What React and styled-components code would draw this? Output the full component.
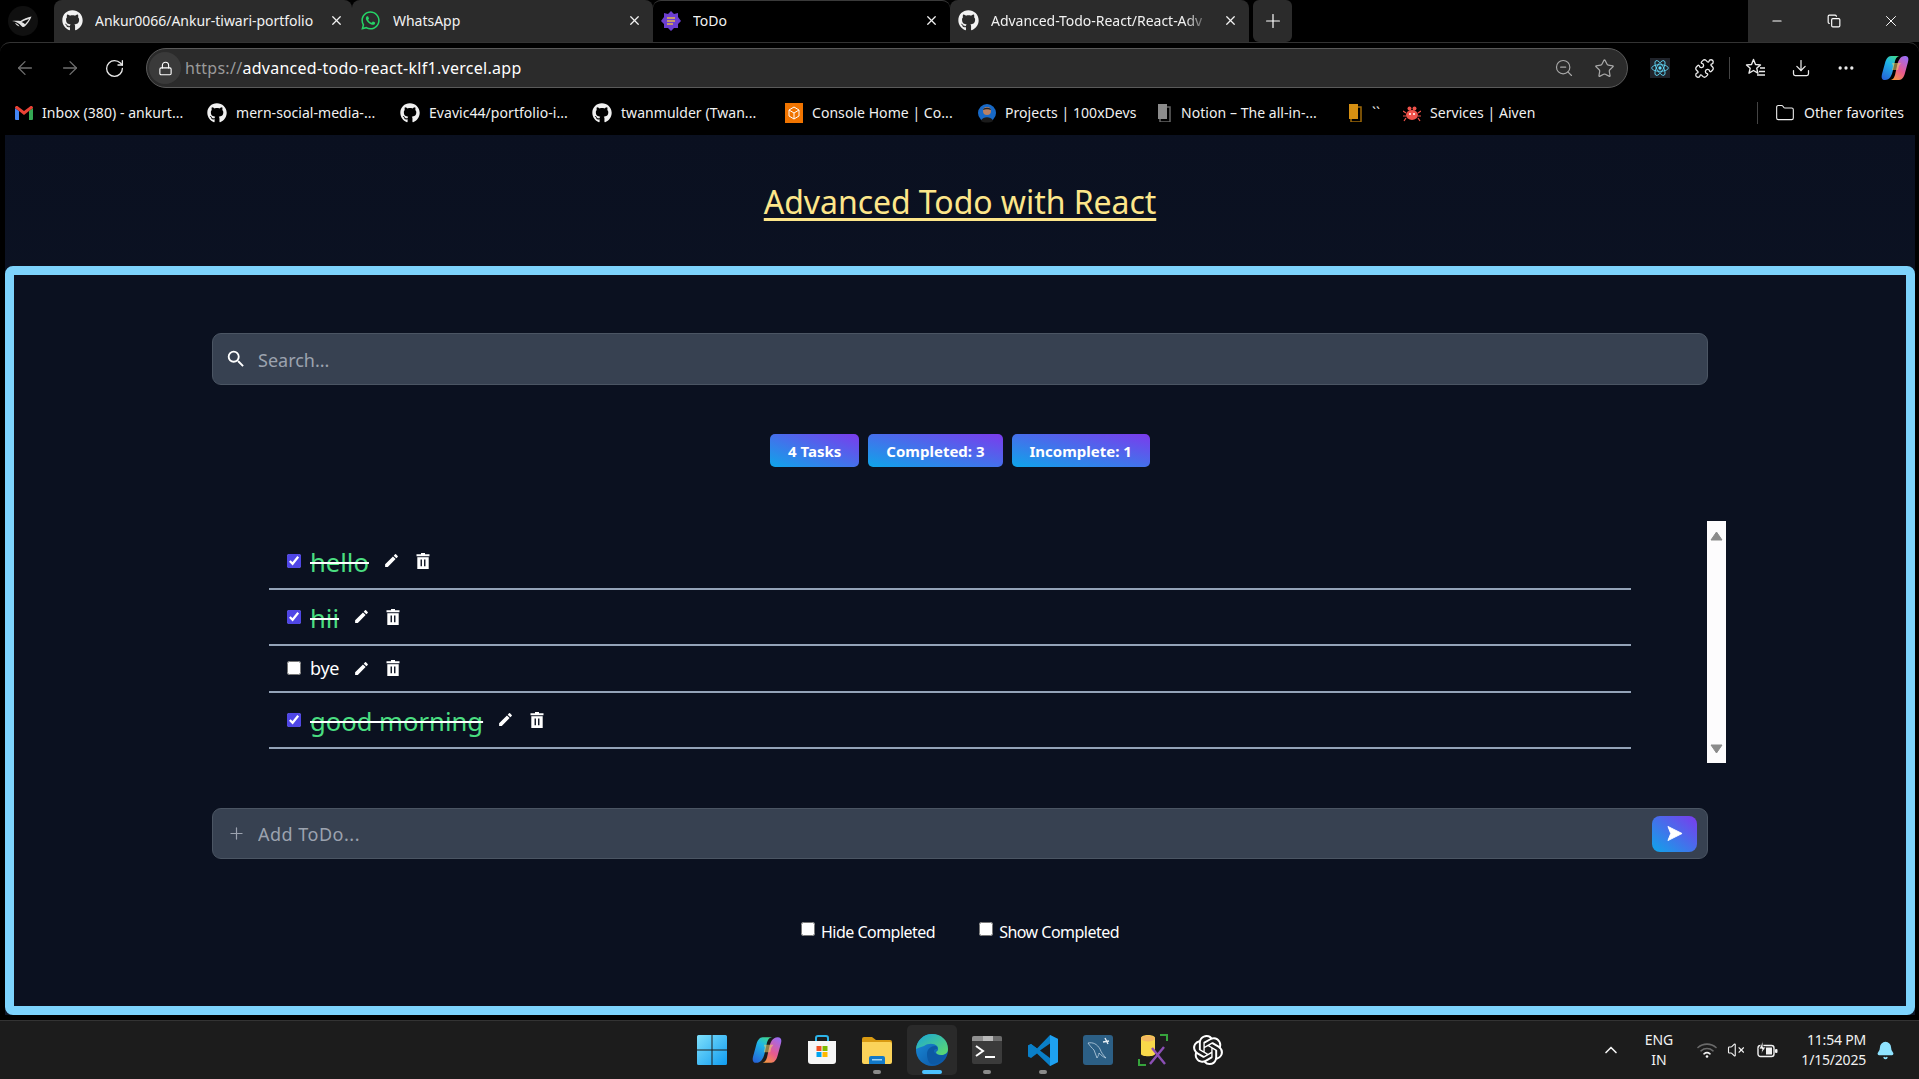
import React from 'react'
import styled, { createGlobalStyle } from 'styled-components'
import {
  ArrowLeft, ArrowRight, RotateCw, Lock, ZoomOut, Star, Puzzle, Download, MoreHorizontal,
  Folder, Plus, X, Minus, Copy, ChevronUp, VolumeX, Bell,
} from 'lucide-react'
import { FaGithub, FaWhatsapp } from 'react-icons/fa'
import { MdEdit, MdSearch } from 'react-icons/md'
import { SiOpenai } from 'react-icons/si'

const GlobalStyle = createGlobalStyle`
  html, body { margin: 0; padding: 0; height: 100%; background: #000; }
  #root { height: 100%; }
  * { box-sizing: border-box; }
  body { font-family: "Noto Sans", "Open Sans", "Liberation Sans", sans-serif; overflow: hidden; }
`

const Screen = styled.div`
  width: 1919px;
  height: 1079px;
  display: flex;
  flex-direction: column;
  background: #000;
  color: #fff;
`

/* ---------- browser chrome ---------- */
const TabStrip = styled.div`
  height: 42px;
  display: flex;
  align-items: stretch;
  flex-shrink: 0;
`
const RogSlot = styled.div`
  width: 54px;
  padding-right: 8px;
  display: flex;
  align-items: center;
  justify-content: center;
`
const Tab = styled.div`
  width: ${p => p.$w}px;
  padding: 0 ${p => p.$pr || 11}px 2px 8px;
  display: flex;
  align-items: center;
  gap: 12px;
  font-size: 14px;
  background: ${p => (p.$active ? '#000' : '#2b2b2b')};
  border-top: ${p => (p.$active ? '1px solid #3a3a3a' : 'none')};
  border-radius: 8px 8px 0 0;
  color: #f2f2f2;
  flex-shrink: 0;
`
const TabTitle = styled.span`
  flex: 1;
  overflow: hidden;
  white-space: nowrap;
  letter-spacing: -0.03px;
  mask-image: ${p => (p.$fade ? 'linear-gradient(90deg, #000 88%, transparent)' : 'none')};
`
const NewTab = styled.div`
  width: 39px;
  margin-left: 4px;
  background: #2b2b2b;
  border-radius: 6px;
  display: flex;
  align-items: center;
  justify-content: center;
`
const StripSpace = styled.div`
  flex: 1;
`
const WindowButtons = styled.div`
  width: 171px;
  background: #2b2b2b;
  display: grid;
  grid-template-columns: repeat(3, 1fr);
  place-items: center;
`
const Toolbar = styled.div`
  height: 51px;
  display: flex;
  align-items: center;
  padding: 0 2px;
  border-top: 1px solid #333;
  border-radius: 10px 10px 0 0;
  flex-shrink: 0;
`
const ToolButton = styled.div`
  width: ${p => p.$w || 45}px;
  height: 40px;
  margin-left: ${p => p.$ml || 0}px;
  display: flex;
  align-items: center;
  justify-content: center;
  color: ${p => (p.$dim ? '#6f6f6f' : '#eaeaea')};
  flex-shrink: 0;
`
const AddressBar = styled.div`
  flex: 1;
  height: 40px;
  margin: 0 9px 0 9px;
  background: #2b2b2b;
  border: 1px solid #5a5a5a;
  border-radius: 20px;
  display: flex;
  align-items: center;
  padding: 0 3px 0 2px;
  font-size: 16px;
`
const LockBadge = styled.div`
  width: 32px;
  height: 32px;
  border-radius: 50%;
  background: #3a3a3a;
  display: flex;
  align-items: center;
  justify-content: center;
  margin-right: 4px;
`
const UrlText = styled.div`
  flex: 1;
  letter-spacing: 0.28px;
  color: #fff;
  span { color: #9a9a9a; }
`
const Divider = styled.div`
  width: 1px;
  height: ${p => p.$h || 22}px;
  margin-left: ${p => p.$ml || 0}px;
  background: #444;
  flex-shrink: 0;
`
const Bookmarks = styled.div`
  height: 42px;
  display: flex;
  align-items: center;
  padding: 0 15px 3px 15px;
  font-size: 14px;
  letter-spacing: 0.05px;
  color: #f0f0f0;
  flex-shrink: 0;
`
const Bookmark = styled.div`
  width: ${p => p.$w}px;
  padding-left: ${p => p.$pl || 0}px;
  display: flex;
  align-items: center;
  gap: 9px;
  white-space: nowrap;
  overflow: hidden;
  flex-shrink: 0;
`
const BookmarkSpace = styled.div`
  flex: 1;
`

/* ---------- page ---------- */
const Page = styled.div`
  flex: 1;
  margin: 0 4px 5px 5px;
  display: flex;
  flex-direction: column;
  background: linear-gradient(180deg, #0a1020 0%, #111a2c 100%);
  min-height: 0;
`
const Header = styled.div`
  height: 131px;
  display: flex;
  align-items: center;
  justify-content: center;
  flex-shrink: 0;
`
const Title = styled.h1`
  margin: 2px 0 0 0;
  font-size: 32px;
  font-weight: 400;
  color: #fde68a;
  text-decoration: underline;
  text-underline-offset: 4px;
  text-decoration-thickness: 3px;
  letter-spacing: -0.05px;
`
const Panel = styled.main`
  flex: 1;
  border: 9px solid #7dd3fc;
  border-radius: 8px;
  background: #0b1120;
  padding: 58px 198px 0 198px;
  display: flex;
  flex-direction: column;
  min-height: 0;
`
const Field = styled.div`
  height: ${p => p.$h}px;
  background: #374151;
  border: 1px solid #4b5563;
  border-radius: 9px;
  display: flex;
  align-items: center;
  padding: 0 10px 0 12px;
  flex-shrink: 0;
`
const FieldIcon = styled.div`
  width: 22px;
  margin-right: 11px;
  display: flex;
  align-items: center;
  justify-content: center;
  color: ${p => p.$color};
`
const FieldInput = styled.input`
  flex: 1;
  background: transparent;
  border: none;
  outline: none;
  padding: 1px 0 0 0;
  font: inherit;
  font-size: 18px;
  letter-spacing: ${p => p.$ls || 0}px;
  color: #fff;
  &::placeholder { color: #9ca3af; opacity: 1; }
`
const Badges = styled.div`
  margin-top: 49px;
  display: flex;
  justify-content: center;
  gap: 9px;
  flex-shrink: 0;
`
const Badge = styled.div`
  height: 33px;
  padding: 0 18px;
  display: flex;
  align-items: center;
  border-radius: 5px;
  background: linear-gradient(to top right, #0ea5e9, #7c3aed);
  font-size: 15px;
  font-weight: 700;
`
const ListArea = styled.div`
  margin: 54px -18px 0 0;
  height: 242px;
  display: flex;
  justify-content: flex-end;
  flex-shrink: 0;
`
const TodoList = styled.ul`
  list-style: none;
  margin: 13px 76px 0 0;
  padding: 0;
  width: 1362px;
`
const TodoRow = styled.li`
  height: ${p => p.$h}px;
  border-bottom: 2px solid #94a3b8;
  padding: 0 0 1px 18px;
  display: flex;
  align-items: center;
`
const Check = styled.input.attrs({ type: 'checkbox' })`
  width: 14px;
  height: 14px;
  margin: 0;
  accent-color: #4f46e5;
  flex-shrink: 0;
`
const TodoText = styled.span`
  margin: ${p => (p.$done ? 4 : 0)}px 14px 0 9px;
  font-size: ${p => (p.$done ? 25.6 : 18)}px;
  letter-spacing: ${p => (p.$done ? 0 : -0.3)}px;
  color: ${p => (p.$done ? '#4ade80' : '#fff')};
  text-decoration: ${p => (p.$done ? 'line-through' : 'none')};
  text-decoration-color: #fff;
  text-decoration-thickness: 2px;
`
const RowIcon = styled.button`
  background: none;
  border: none;
  padding: 0;
  margin-right: 16px;
  color: #fff;
  display: flex;
`
const ScrollTrack = styled.div`
  width: 19px;
  background: #fdfcfd;
  display: flex;
  flex-direction: column;
  justify-content: space-between;
  align-items: center;
  padding: 10px 0 9px;
`
const AddField = styled(Field)`
  margin-top: 45px;
`
const SendButton = styled.button`
  width: 45px;
  height: 36px;
  border: none;
  border-radius: 8px;
  background: linear-gradient(to top right, #0ea5e9, #7c3aed);
  display: flex;
  align-items: center;
  justify-content: center;
  padding: 0;
`
const Filters = styled.div`
  margin-top: 62px;
  display: flex;
  justify-content: center;
  gap: 44px;
  font-size: 16px;
  letter-spacing: -0.52px;
`
const FilterLabel = styled.label`
  display: flex;
  align-items: flex-start;
  gap: 6px;
  line-height: 22px;
  input { margin-top: 1px; }
`

/* ---------- taskbar ---------- */
const Taskbar = styled.footer`
  height: 59px;
  background: #1c1c1c;
  border-top: 1px solid #333;
  display: flex;
  align-items: center;
  flex-shrink: 0;
`
const TaskIcons = styled.div`
  margin-left: 687px;
  display: flex;
  align-items: center;
  gap: 5.1px;
`
const TaskIcon = styled.div`
  width: 50px;
  height: 50px;
  display: flex;
  align-items: center;
  justify-content: center;
  position: relative;
  border-radius: 5px;
  background: ${p => (p.$active ? '#2a2a2a' : 'transparent')};
  &::after {
    content: '';
    display: ${p => (p.$dot || p.$active ? 'block' : 'none')};
    position: absolute;
    bottom: 1px;
    left: 50%;
    transform: translateX(-50%);
    width: ${p => (p.$active ? 20 : 8)}px;
    height: 4px;
    border-radius: 2px;
    background: ${p => (p.$active ? '#4cc2ff' : '#8a8a8a')};
  }
`
const Tray = styled.div`
  margin-left: auto;
  display: flex;
  align-items: center;
  padding-right: 19px;
  color: #f2f2f2;
`
const TrayText = styled.div`
  font-size: 14px;
  line-height: 20px;
  text-align: ${p => p.$align || 'center'};
  letter-spacing: ${p => p.$ls || 0};
`
const TraySlot = styled.div`
  width: ${p => p.$w}px;
  padding-right: ${p => p.$pr || 0}px;
  display: flex;
  align-items: center;
  justify-content: ${p => (p.$end ? 'flex-end' : 'center')};
`

/* ---------- drawn logos ---------- */
const RogLogo = () => (
  <svg width="30" height="30" viewBox="0 0 30 30">
    <circle cx="15" cy="15" r="15" fill="#101010" />
    <path d="M4 15c4 .5 7 2 10 5.500 1 .8 2 .6 3-.3 3-2.700 5-6 6.500-9.700-4 1-8 2.300-11 4.500C10 14.500 7 14.500 4 15z" fill="#e0e0e0" />
    <path d="M7 17c2 .5 3.500 1.700 4.500 3.500C9.500 20 8 19 7 17z" fill="#e0e0e0" />
    <path d="M13.500 16c2.500-1.300 5-2.300 7.500-3-1 2-2.500 3.800-4 5.300-1-1-2-1.700-3.500-2.300z" fill="#101010" />
  </svg>
)
const Gmail = () => (
  <svg width="18" height="14" viewBox="0 0 18 14">
    <path d="M0 2l4 3v9H1a1 1 0 0 1-1-1z" fill="#4285f4" />
    <path d="M18 2l-4 3v9h3a1 1 0 0 0 1-1z" fill="#34a853" />
    <path d="M0 2c0-2 2-2.500 3-1.500L9 5l6-4.500C16-.5 18 0 18 2l-4 3-5 4-5-4z" fill="#ea4335" />
  </svg>
)
const TodoFavicon = () => (
  <svg width="20" height="20" viewBox="0 0 20 20">
    <polygon points="10,0 13,3 17,2 17,6 20,10 17,13 17,17 13,17 10,20 7,17 3,17 3,13 0,10 3,6 3,2 7,3" fill="#6d3fd1" />
    <path d="M6 7h8M6 10h8M6 13h6" stroke="#e5b94a" strokeWidth="1.6" />
  </svg>
)
const ReactExt = () => (
  <svg width="20" height="20" viewBox="-12 -12 24 24">
    <rect x="-12" y="-12" width="24" height="24" fill="#20232a" />
    <circle r="2" fill="#61dafb" />
    <g fill="none" stroke="#61dafb" strokeWidth="1">
      <ellipse rx="10" ry="4" />
      <ellipse rx="10" ry="4" transform="rotate(60)" />
      <ellipse rx="10" ry="4" transform="rotate(120)" />
    </g>
  </svg>
)
const FavoritesIcon = () => (
  <svg width="22" height="22" viewBox="0 0 22 22" fill="none" stroke="#eaeaea" strokeWidth="1.400" strokeLinejoin="round">
    <path d="M8.500 2.500l2 5 5 .4-3.800 3.300 1.200 5-4.400-2.700L4 16.200l1.200-5L1.500 7.900l5-.4z" />
    <path d="M15 11h5M14 14.500h6M12 18h8" />
  </svg>
)
const CopilotLogo = ({ size }) => (
  <svg width={size} height={size} viewBox="0 0 28 28">
    <defs>
      <linearGradient id={`cpA${size}`} x1="0.7" y1="0" x2="0.2" y2="1">
        <stop offset="0" stopColor="#3fd68f" />
        <stop offset=".35" stopColor="#1fb6e8" />
        <stop offset="1" stopColor="#2565d8" />
      </linearGradient>
      <linearGradient id={`cpB${size}`} x1="0.8" y1="0" x2="0.2" y2="1">
        <stop offset="0" stopColor="#9b6cf2" />
        <stop offset=".55" stopColor="#e8598f" />
        <stop offset="1" stopColor="#f59a3c" />
      </linearGradient>
    </defs>
    <path d="M18 26H8c4 0 5-2 6-5l2-9c1-5 3-10 8-10 3 0 4 2 3 6l-3 11c-1 4-3 7-6 7z" fill={`url(#cpB${size})`} />
    <path d="M10 2h10c-4 0-5 2-6 5l-2 9c-1 5-3 10-8 10-3 0-4-2-3-6L4 9c1-4 3-7 6-7z" fill={`url(#cpA${size})`} />
    <path d="M11 9h9l-2 3-1 4h-6l1-4z" fill="#f3d36a" opacity=".55" />
  </svg>
)
const ConsoleLogo = () => (
  <svg width="18" height="20" viewBox="0 0 18 20">
    <rect width="18" height="20" fill="#f07400" />
    <path d="M9 4l5 3v6l-5 3-5-3V7zM4 7l5 3 5-3M9 10v6" fill="none" stroke="#fff" strokeWidth="1" />
  </svg>
)
const Avatar = () => (
  <svg width="18" height="20" viewBox="0 0 18 20">
    <circle cx="9" cy="10" r="9" fill="#1769c7" />
    <circle cx="9" cy="8" r="4" fill="#b98063" />
    <path d="M5 7c0-3 8-3 8 0-2-1-6-1-8 0z" fill="#222" />
    <path d="M3 18c1-5 11-5 12 0-3 2-9 2-12 0z" fill="#1b1b1b" />
  </svg>
)
const NoteIcon = ({ color, fold }) => (
  <svg width="15" height="18" viewBox="0 0 15 18">
    <path d="M3 3h10v15H3z" fill="none" stroke={fold} strokeWidth="1.5" />
    <path d="M1 0h9v15H1z" fill={color} />
  </svg>
)
const AivenLogo = () => (
  <svg width="18" height="18" viewBox="0 0 18 18">
    <ellipse cx="9" cy="11" rx="6" ry="5" fill="#f0524a" />
    <circle cx="6.500" cy="4.500" r="2" fill="#f0524a" />
    <circle cx="11.500" cy="4.500" r="2" fill="#f0524a" />
    <path d="M3 9L0 7M3 12H0M3 14l-2 3M15 9l3-2M15 12h3M15 14l2 3" stroke="#f0524a" strokeWidth="1.2" />
    <circle cx="7" cy="10" r="1" fill="#fff" />
    <circle cx="11" cy="10" r="1" fill="#fff" />
  </svg>
)
const TrashIcon = () => (
  <svg width="14" height="16" viewBox="0 0 14 16">
    <path d="M5 0h4v1.200h4.500v2H.5v-2H5z" fill="#fff" />
    <path d="M1.300 4.200h11.400V16H1.300z" fill="#fff" />
    <path d="M4.500 6.500v6.800M8 6.500v6.800" stroke="#0b1120" strokeWidth="1.400" transform="translate(.75 0)" />
  </svg>
)
const WifiIcon = () => (
  <svg width="20" height="16" viewBox="0 0 20 16" fill="none" strokeWidth="1.600" strokeLinecap="round">
    <path d="M1 5.500c5-4.500 13-4.500 18 0" stroke="#6a6a6a" />
    <path d="M4 8.800c3.500-3 8.500-3 12 0" stroke="#6a6a6a" />
    <path d="M7 11.800c1.800-1.400 4.200-1.400 6 0" stroke="#f2f2f2" />
    <circle cx="10" cy="14.500" r="1.300" fill="#f2f2f2" stroke="none" />
  </svg>
)
const BatteryIcon = () => (
  <svg width="21" height="18" viewBox="0 0 21 18">
    <rect x="1" y="4.500" width="16" height="11" rx="2.500" fill="none" stroke="#f2f2f2" strokeWidth="1.400" />
    <rect x="9" y="6.500" width="6" height="7" fill="#f2f2f2" />
    <rect x="18" y="8" width="2.500" height="4" rx="1" fill="#f2f2f2" />
    <path d="M6 0L2 8h3l-1 5 5-7H6z" fill="#f2f2f2" stroke="#1c1c1c" strokeWidth=".8" />
  </svg>
)
const WinLogo = () => (
  <svg width="30" height="30" viewBox="0 0 30 30">
    <defs>
      <linearGradient id="winG" x1="0" y1="0" x2="1" y2="1">
        <stop offset="0" stopColor="#7fe0fb" />
        <stop offset="1" stopColor="#0f9bf0" />
      </linearGradient>
    </defs>
    <path d="M0 1.500A1.500 1.500 0 0 1 1.500 0h13v14.500H0zM15.500 0h13A1.500 1.500 0 0 1 30 1.500v13H15.500zM0 15.500h14.500V30h-13A1.500 1.500 0 0 1 0 28.500zM15.500 15.500H30v13a1.500 1.500 0 0 1-1.500 1.500h-13z" fill="url(#winG)" />
  </svg>
)
const StoreLogo = () => (
  <svg width="30" height="30" viewBox="0 0 30 30">
    <path d="M9 6V3a2 2 0 0 1 2-2h8a2 2 0 0 1 2 2v3" fill="none" stroke="#2cb3e8" strokeWidth="2" />
    <path d="M1 6h28v20a3 3 0 0 1-3 3H4a3 3 0 0 1-3-3z" fill="#f6f6f6" />
    <rect x="9.500" y="11" width="5" height="5" fill="#f25022" />
    <rect x="15.500" y="11" width="5" height="5" fill="#7fba00" />
    <rect x="9.500" y="17" width="5" height="5" fill="#00a4ef" />
    <rect x="15.500" y="17" width="5" height="5" fill="#ffb900" />
  </svg>
)
const FolderLogo = () => (
  <svg width="30" height="28" viewBox="0 0 30 28">
    <path d="M0 3a2 2 0 0 1 2-2h8l4 3h14a2 2 0 0 1 2 2v4H0z" fill="#d99a12" />
    <path d="M0 6h28a2 2 0 0 1 2 2v18a2 2 0 0 1-2 2H2a2 2 0 0 1-2-2z" fill="#fbd35a" />
    <path d="M7 28v-6a2 2 0 0 1 2-2h12a2 2 0 0 1 2 2v6z" fill="#1279c9" />
    <rect x="10" y="23" width="10" height="1.500" fill="#9ed3f5" />
  </svg>
)
const EdgeLogo = () => (
  <svg width="32" height="32" viewBox="0 0 32 32">
    <defs>
      <linearGradient id="edgeA" x1="0" y1="0" x2="1" y2="1">
        <stop offset="0" stopColor="#1aa5d8" />
        <stop offset="1" stopColor="#5fdc6a" />
      </linearGradient>
      <linearGradient id="edgeB" x1="0" y1="0" x2="1" y2="1">
        <stop offset="0" stopColor="#1b8fdc" />
        <stop offset="1" stopColor="#0a4f9e" />
      </linearGradient>
    </defs>
    <circle cx="16" cy="16" r="16" fill="url(#edgeB)" />
    <path d="M0 15C1 6 8 0 16 0c9 0 16 6 16 15 0 4-3 6-7 6-3 0-5-1-5-3 2-1 3-3 1-6-3-3-9-3-13 0-3 1-6 2-8 3z" fill="url(#edgeA)" />
    <path d="M11 20c0-5 4-8 8-8 2 0 3 1 2 3-3 0-4 2-2 4 3 3 8 3 11 1-3 7-10 11-15 10-3-2-4-6-4-10z" fill="#0c59a4" />
  </svg>
)
const TerminalLogo = () => (
  <svg width="30" height="28" viewBox="0 0 30 28">
    <rect width="30" height="28" rx="2" fill="#3b3b3b" />
    <path d="M0 2a2 2 0 0 1 2-2h9v5H0z" fill="#8f8f8f" />
    <rect x="11" width="10" height="5" fill="#b8b8b8" />
    <path d="M21 0h7a2 2 0 0 1 2 2v3h-9z" fill="#6c6c6c" />
    <path d="M4 10l7 5-7 5" fill="none" stroke="#fff" strokeWidth="2" />
    <rect x="13" y="20" width="10" height="2" fill="#fff" />
  </svg>
)
const VsCodeLogo = () => (
  <svg width="30" height="31" viewBox="0 0 30 31">
    <path d="M22 0l8 4v23l-8 4-13-12.500-6 4.500-3-1.500V10.500L3 9l6 4.500z" fill="#0a7fc8" />
    <path d="M22 0l8 4v23l-8 4z" fill="#1ea1f2" />
    <path d="M3 9l19 14v-15L3 22l-3-1.500v-10z" fill="#0a7fc8" />
    <path d="M22 8.500L12 15.500l10 7.500z" fill="#1c1c1c" />
  </svg>
)
const MysqlLogo = () => (
  <svg width="30" height="30" viewBox="0 0 30 30">
    <rect width="30" height="30" rx="3" fill="#2c5f85" />
    <path d="M5 8c5-1 9 1 12 6 1 3 3 6 6 9-3-1-5-3-7-5 0 2-1 3-2 5-1-3-2-5-3-8-2-2-4-4-6-7z" fill="none" stroke="#bcd2e2" strokeWidth=".8" />
    <path d="M22 3l3 6M20 7l6-1" stroke="#e6eef4" strokeWidth="1.400" />
  </svg>
)
const UtilLogo = () => (
  <svg width="30" height="32" viewBox="0 0 30 32">
    <path d="M22 1h7v6M1 25v6h7" fill="none" stroke="#36a33c" strokeWidth="2" />
    <path d="M3 4c0-4 14-4 14 0v16c0 3-14 3-14 0z" fill="#f8d94a" />
    <ellipse cx="10" cy="4.500" rx="7" ry="3" fill="#f4b860" />
    <path d="M12 30l14-17M14 14l13 16" stroke="#8b4fb5" strokeWidth="2.400" />
  </svg>
)

const tasks = [
  { text: 'hello', done: true, h: 56 },
  { text: 'hii', done: true, h: 56 },
  { text: 'bye', done: false, h: 47 },
  { text: 'good morning', done: true, h: 56 },
]

const bookmarks = [
  { w: 192, icon: <Gmail />, text: 'Inbox (380) - ankurt...' },
  { w: 193, icon: <FaGithub size={20} />, text: 'mern-social-media-...' },
  { w: 192, icon: <FaGithub size={20} />, text: 'Evavic44/portfolio-i...' },
  { w: 193, icon: <FaGithub size={20} />, text: 'twanmulder (Twan...' },
  { w: 193, icon: <ConsoleLogo />, text: 'Console Home | Co...' },
  { w: 179, icon: <Avatar />, text: 'Projects | 100xDevs' },
  { w: 191, icon: <NoteIcon color="#8c8c8c" fold="#666" />, text: 'Notion – The all-in-...' },
  { w: 55, icon: <NoteIcon color="#d58f12" fold="#a06a08" />, text: '``' },
  { w: 160, icon: <AivenLogo />, text: 'Services | Aiven' },
]

const App = () => {
  return (
    <Screen>
      <GlobalStyle />
      <TabStrip>
        <RogSlot><RogLogo /></RogSlot>
        <Tab $w={298} $pr={8}>
          <FaGithub size={21} />
          <TabTitle>Ankur0066/Ankur-tiwari-portfolio</TabTitle>
          <X size={15} />
        </Tab>
        <Tab $w={301}>
          <FaWhatsapp size={21} color="#25d366" />
          <TabTitle>WhatsApp</TabTitle>
          <X size={15} />
        </Tab>
        <Tab $w={297} $active>
          <TodoFavicon />
          <TabTitle>ToDo</TabTitle>
          <X size={15} />
        </Tab>
        <Tab $w={299}>
          <FaGithub size={21} />
          <TabTitle $fade>Advanced-Todo-React/React-Adv</TabTitle>
          <X size={15} />
        </Tab>
        <NewTab><Plus size={22} strokeWidth={1.3} /></NewTab>
        <StripSpace />
        <WindowButtons>
          <Minus size={14} />
          <Copy size={14} />
          <X size={18} strokeWidth={1.3} />
        </WindowButtons>
      </TabStrip>

      <Toolbar>
        <ToolButton $dim><ArrowLeft size={22} strokeWidth={1.4} /></ToolButton>
        <ToolButton $dim><ArrowRight size={22} strokeWidth={1.4} /></ToolButton>
        <ToolButton><RotateCw size={21} strokeWidth={1.5} /></ToolButton>
        <AddressBar>
          <LockBadge><Lock size={15} strokeWidth={1.8} /></LockBadge>
          <UrlText><span>https://</span>advanced-todo-react-klf1.vercel.app</UrlText>
          <ToolButton $w={40} $dim><ZoomOut size={20} strokeWidth={1.4} color="#a8a8a8" /></ToolButton>
          <ToolButton $w={40} $dim><Star size={21} strokeWidth={1.4} color="#a8a8a8" /></ToolButton>
        </AddressBar>
        <ToolButton><ReactExt /></ToolButton>
        <ToolButton><Puzzle size={21} strokeWidth={1.5} /></ToolButton>
        <Divider $ml={2} />
        <ToolButton $ml={3}><FavoritesIcon /></ToolButton>
        <ToolButton><Download size={20} strokeWidth={1.5} /></ToolButton>
        <ToolButton><MoreHorizontal size={20} /></ToolButton>
        <ToolButton $ml={4}><CopilotLogo size={28} /></ToolButton>
      </Toolbar>

      <Bookmarks>
        {bookmarks.map(b => (
          <Bookmark key={b.text} $w={b.w}>{b.icon}{b.text}</Bookmark>
        ))}
        <BookmarkSpace />
        <Divider $h={22} />
        <Bookmark $w={146} $pl={17}>
          <Folder size={20} strokeWidth={1.3} />Other favorites
        </Bookmark>
      </Bookmarks>

      <Page>
        <Header>
          <Title>Advanced Todo with React</Title>
        </Header>
        <Panel>
          <Field $h={52}>
            <FieldIcon $color="#fff"><MdSearch size={24} /></FieldIcon>
            <FieldInput placeholder="Search..." />
          </Field>

          <Badges>
            <Badge>4 Tasks</Badge>
            <Badge>Completed: 3</Badge>
            <Badge>Incomplete: 1</Badge>
          </Badges>

          <ListArea>
            <TodoList>
              {tasks.map(t => (
                <TodoRow key={t.text} $h={t.h}>
                  <Check defaultChecked={t.done} />
                  <TodoText $done={t.done}>{t.text}</TodoText>
                  <RowIcon><MdEdit size={17} /></RowIcon>
                  <RowIcon><TrashIcon /></RowIcon>
                </TodoRow>
              ))}
            </TodoList>
            <ScrollTrack>
              <svg width="13" height="10" viewBox="0 0 13 10"><path d="M6.500 1L12 9H1z" fill="#8b8b8b" stroke="#8b8b8b" strokeLinejoin="round" /></svg>
              <svg width="13" height="10" viewBox="0 0 13 10"><path d="M6.500 9L12 1H1z" fill="#8b8b8b" stroke="#8b8b8b" strokeLinejoin="round" /></svg>
            </ScrollTrack>
          </ListArea>

          <AddField $h={51}>
            <FieldIcon $color="#9ca3af"><Plus size={19} strokeWidth={1.5} /></FieldIcon>
            <FieldInput placeholder="Add ToDo..." $ls={0.5} />
            <SendButton>
              <svg width="16" height="17" viewBox="0 0 17 17"><path d="M1 1l15 7.500L1 16l3-7.500z" fill="#fff" stroke="#fff" strokeLinejoin="round" /></svg>
            </SendButton>
          </AddField>

          <Filters>
            <FilterLabel><Check />Hide Completed</FilterLabel>
            <FilterLabel><Check />Show Completed</FilterLabel>
          </Filters>
        </Panel>
      </Page>

      <Taskbar>
        <TaskIcons>
          <TaskIcon><WinLogo /></TaskIcon>
          <TaskIcon><CopilotLogo size={30} /></TaskIcon>
          <TaskIcon><StoreLogo /></TaskIcon>
          <TaskIcon $dot><FolderLogo /></TaskIcon>
          <TaskIcon $active><EdgeLogo /></TaskIcon>
          <TaskIcon $dot><TerminalLogo /></TaskIcon>
          <TaskIcon $dot><VsCodeLogo /></TaskIcon>
          <TaskIcon><MysqlLogo /></TaskIcon>
          <TaskIcon><UtilLogo /></TaskIcon>
          <TaskIcon><SiOpenai size={30} /></TaskIcon>
        </TaskIcons>
        <Tray>
          <TraySlot $w={24}><ChevronUp size={20} /></TraySlot>
          <TraySlot $w={72}><TrayText>ENG<br />IN</TrayText></TraySlot>
          <TraySlot $w={24}><WifiIcon /></TraySlot>
          <TraySlot $w={34}><VolumeX size={18} strokeWidth={1.5} /></TraySlot>
          <TraySlot $w={28}><BatteryIcon /></TraySlot>
          <TraySlot $w={89} $pr={4} $end><TrayText $align="right" $ls="-0.2px">11:54 PM<br />1/15/2025</TrayText></TraySlot>
          <TraySlot $w={30}><Bell size={19} fill="#8fe3ff" color="#8fe3ff" /></TraySlot>
        </Tray>
      </Taskbar>
    </Screen>
  )
}

export default App
